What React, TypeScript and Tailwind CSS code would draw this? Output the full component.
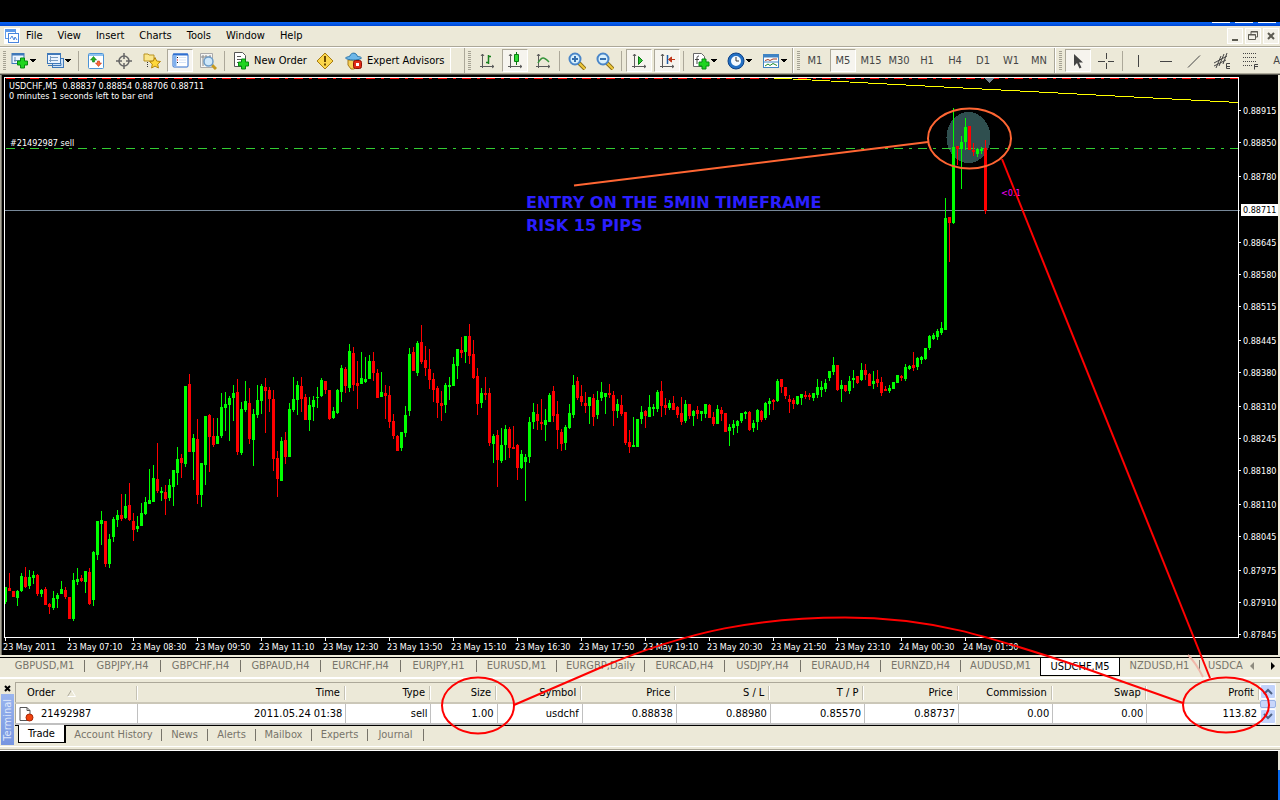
import type { ReactNode } from "react";

type Candle = [up: number, high: number, top: number, bottom: number, low: number];

const candles: Candle[] = [
  [1, 587, 587, 602, 604], [0, 573, 588, 591, 591], [0, 591, 591, 597, 597], [1, 590, 591, 598, 606],
  [1, 573, 576, 591, 592], [0, 567, 577, 587, 588], [1, 570, 577, 586, 589], [1, 571, 575, 578, 584],
  [0, 574, 575, 594, 596], [1, 589, 590, 594, 597], [0, 587, 589, 605, 605], [0, 603, 604, 607, 614],
  [1, 591, 598, 608, 610], [1, 593, 595, 599, 608], [1, 581, 589, 594, 594], [0, 587, 590, 597, 599],
  [0, 597, 597, 619, 619], [1, 573, 580, 619, 621], [1, 568, 579, 582, 585], [0, 575, 578, 581, 582],
  [1, 571, 571, 582, 593], [0, 568, 572, 604, 605], [1, 551, 552, 600, 606], [1, 521, 521, 555, 560],
  [1, 511, 520, 524, 545], [0, 521, 521, 564, 567], [1, 534, 539, 564, 568], [1, 517, 519, 537, 542],
  [1, 510, 515, 520, 527], [0, 494, 515, 519, 521], [1, 494, 506, 518, 519], [0, 483, 505, 520, 521],
  [0, 513, 521, 530, 541], [1, 516, 526, 529, 532], [1, 503, 513, 526, 526], [1, 497, 502, 514, 515],
  [1, 469, 500, 504, 504], [1, 465, 478, 502, 502], [0, 443, 479, 491, 493], [1, 487, 491, 493, 501],
  [0, 485, 492, 499, 515], [1, 479, 485, 498, 501], [1, 470, 470, 487, 506], [1, 447, 459, 473, 485],
  [0, 454, 458, 463, 478], [1, 386, 386, 464, 467], [0, 374, 384, 452, 452], [1, 434, 438, 452, 480],
  [0, 419, 439, 495, 504], [1, 463, 463, 495, 507], [1, 416, 416, 465, 485], [0, 414, 415, 437, 472],
  [0, 418, 436, 445, 447], [1, 418, 436, 444, 444], [1, 393, 407, 436, 438], [1, 392, 404, 408, 431],
  [1, 396, 398, 405, 441], [1, 385, 393, 398, 421], [0, 379, 392, 452, 455], [1, 402, 409, 453, 455],
  [1, 381, 401, 410, 412], [0, 388, 403, 439, 444], [1, 409, 414, 440, 466], [1, 385, 400, 415, 418],
  [1, 384, 386, 401, 414], [0, 378, 387, 391, 433], [0, 387, 390, 399, 412], [0, 390, 399, 459, 471],
  [0, 451, 458, 479, 497], [1, 437, 441, 481, 481], [0, 432, 440, 457, 464], [1, 403, 409, 457, 457],
  [1, 377, 399, 410, 412], [1, 381, 385, 400, 415], [0, 377, 386, 399, 412], [0, 394, 397, 420, 420],
  [1, 397, 405, 420, 431], [1, 396, 400, 407, 421], [1, 387, 397, 398, 408], [1, 378, 380, 396, 397],
  [0, 381, 381, 390, 394], [0, 390, 390, 419, 420], [1, 407, 411, 418, 419], [1, 389, 390, 413, 414],
  [1, 365, 368, 392, 402], [0, 367, 369, 386, 393], [1, 344, 351, 388, 392], [0, 347, 353, 385, 391],
  [0, 361, 383, 386, 409], [1, 352, 378, 384, 384], [1, 357, 379, 382, 383], [1, 355, 361, 379, 379],
  [0, 352, 361, 373, 381], [0, 369, 373, 398, 398], [1, 372, 392, 397, 397], [0, 385, 393, 396, 419],
  [0, 386, 395, 422, 428], [0, 414, 421, 436, 439], [0, 435, 436, 451, 451], [1, 432, 432, 448, 451],
  [1, 406, 415, 433, 437], [1, 348, 354, 411, 416], [0, 347, 352, 371, 371], [1, 341, 343, 373, 376],
  [0, 325, 342, 362, 364], [0, 346, 360, 368, 376], [0, 349, 369, 380, 389], [0, 373, 379, 390, 402],
  [0, 386, 388, 403, 418], [0, 391, 403, 406, 421], [1, 383, 385, 405, 413], [1, 377, 385, 387, 400],
  [1, 357, 364, 386, 386], [1, 349, 349, 366, 379], [0, 337, 350, 353, 358], [1, 336, 336, 352, 363],
  [0, 324, 336, 356, 364], [0, 340, 354, 378, 379], [0, 368, 376, 404, 415], [1, 388, 393, 403, 408],
  [0, 377, 393, 395, 400], [0, 388, 393, 443, 446], [1, 434, 436, 444, 463], [0, 430, 435, 460, 487],
  [1, 428, 445, 461, 463], [1, 425, 429, 445, 460], [0, 427, 429, 448, 458], [0, 426, 447, 449, 449],
  [0, 444, 445, 468, 480], [1, 450, 454, 468, 469], [1, 454, 457, 462, 501], [1, 417, 422, 457, 463],
  [1, 403, 412, 422, 429], [0, 404, 414, 421, 430], [0, 399, 422, 424, 430], [1, 409, 420, 425, 441],
  [1, 393, 395, 422, 422], [0, 386, 391, 416, 422], [0, 401, 414, 430, 449], [0, 429, 432, 444, 451],
  [1, 425, 427, 443, 450], [1, 404, 413, 428, 429], [1, 375, 385, 415, 418], [0, 377, 381, 398, 400],
  [0, 385, 396, 402, 406], [0, 392, 403, 406, 413], [1, 397, 397, 406, 424], [0, 394, 398, 417, 426],
  [1, 391, 400, 415, 419], [1, 382, 392, 398, 401], [1, 393, 393, 397, 414], [0, 384, 393, 395, 398],
  [0, 391, 395, 411, 426], [1, 399, 404, 411, 418], [0, 395, 405, 414, 416], [0, 412, 412, 443, 445],
  [0, 430, 442, 447, 453], [1, 417, 445, 447, 447], [1, 419, 419, 447, 447], [1, 406, 412, 419, 424],
  [0, 410, 411, 416, 428], [1, 395, 407, 417, 417], [1, 404, 407, 409, 416], [1, 390, 392, 409, 412],
  [0, 381, 391, 406, 417], [0, 398, 405, 408, 415], [1, 400, 403, 408, 410], [0, 396, 403, 410, 410],
  [0, 406, 407, 415, 418], [0, 397, 413, 422, 425], [1, 400, 404, 421, 423], [0, 404, 404, 416, 419],
  [1, 410, 411, 416, 426], [0, 406, 410, 414, 419], [1, 411, 411, 414, 421], [1, 404, 404, 414, 418],
  [0, 404, 405, 418, 418], [0, 412, 417, 424, 426], [1, 405, 409, 424, 424], [0, 407, 410, 414, 421],
  [0, 413, 413, 432, 432], [1, 424, 427, 431, 446], [1, 420, 424, 428, 435], [1, 420, 421, 426, 433],
  [1, 413, 413, 421, 423], [1, 411, 412, 414, 419], [0, 411, 412, 430, 431], [1, 420, 423, 428, 432],
  [1, 409, 410, 422, 430], [0, 410, 411, 420, 422], [1, 402, 403, 418, 420], [1, 398, 401, 404, 415],
  [0, 399, 400, 402, 410], [1, 379, 381, 401, 402], [0, 379, 379, 387, 393], [0, 387, 387, 396, 399],
  [0, 395, 399, 402, 413], [0, 398, 400, 404, 409], [1, 396, 396, 404, 405], [1, 394, 394, 398, 405],
  [0, 391, 395, 397, 399], [0, 393, 395, 397, 400], [1, 393, 393, 398, 401], [1, 379, 387, 395, 398],
  [1, 381, 387, 390, 397], [1, 379, 383, 389, 392], [1, 371, 371, 378, 381], [1, 357, 365, 372, 375],
  [0, 365, 365, 390, 391], [1, 380, 385, 389, 402], [0, 385, 385, 391, 392], [1, 376, 381, 391, 394],
  [1, 370, 378, 380, 388], [0, 376, 376, 383, 384], [1, 363, 370, 380, 381], [0, 364, 370, 375, 380],
  [0, 373, 374, 386, 386], [1, 371, 381, 384, 389], [0, 370, 379, 383, 387], [0, 377, 382, 393, 396],
  [0, 386, 389, 391, 391], [1, 385, 388, 391, 393], [1, 382, 382, 389, 389], [1, 375, 375, 383, 383],
  [0, 375, 376, 378, 381], [1, 364, 367, 379, 381], [1, 365, 366, 369, 370], [0, 352, 365, 368, 371],
  [1, 357, 358, 367, 370], [1, 356, 357, 360, 364], [1, 348, 348, 359, 360], [1, 335, 336, 348, 350],
  [1, 333, 335, 339, 340], [1, 329, 331, 337, 340], [1, 322, 328, 333, 335], [1, 198, 218, 330, 330],
  [0, 217, 217, 223, 262], [1, 108, 147, 223, 224], [0, 146, 146, 149, 165], [1, 136, 142, 149, 189],
  [1, 118, 127, 142, 150], [0, 126, 126, 150, 150], [0, 143, 150, 152, 156], [1, 148, 149, 154, 157],
  [1, 147, 149, 151, 154], [0, 140, 148, 211, 214],
];

const prices: [number, string][] = [
  [110, "0.88915"], [142, "0.88850"], [176, "0.88780"], [242, "0.88645"],
  [274, "0.88580"], [306, "0.88515"], [340, "0.88445"], [372, "0.88380"],
  [406, "0.88310"], [438, "0.88245"], [470, "0.88180"], [504, "0.88110"],
  [536, "0.88045"], [570, "0.87975"], [602, "0.87910"], [634, "0.87845"],
];

const times = [
  "23 May 2011", "23 May 07:10", "23 May 08:30", "23 May 09:50", "23 May 11:10", "23 May 12:30",
  "23 May 13:50", "23 May 15:10", "23 May 16:30", "23 May 17:50", "23 May 19:10", "23 May 20:30",
  "23 May 21:50", "23 May 23:10", "24 May 00:30", "24 May 01:50",
];

const symbolTabs: [string, string][] = [
  ["GBPUSD,M1", "w-20"], ["GBPJPY,H4", "w-[76px]"], ["GBPCHF,H4", "w-20"], ["GBPAUD,H4", "w-20"],
  ["EURCHF,H4", "w-20"], ["EURJPY,H1", "w-[76px]"], ["EURUSD,M1", "w-20"], ["EURGBP,Daily", "w-[88px]"],
  ["EURCAD,H4", "w-20"], ["USDJPY,H4", "w-[76px]"], ["EURAUD,H4", "w-20"], ["EURNZD,H4", "w-20"],
  ["AUDUSD,M1", "w-20"], ["USDCHF,M5", "w-20"], ["NZDUSD,H1", "w-20"],
];

const terminalTabs: [string, string][] = [
  ["Account History", "w-24"], ["News", "w-[46px]"], ["Alerts", "w-12"],
  ["Mailbox", "w-14"], ["Experts", "w-14"], ["Journal", "w-14"],
];

const columns: [string, string, string][] = [
  ["Time", "2011.05.24 01:38", "w-[208px]"],
  ["Type", "sell", "w-[85px]"],
  ["Size", "1.00", "w-[66px]"],
  ["Symbol", "usdchf", "w-[85px]"],
  ["Price", "0.88838", "w-[94px]"],
  ["S / L", "0.88980", "w-[94px]"],
  ["T / P", "0.85570", "w-[94px]"],
  ["Price", "0.88737", "w-[94px]"],
  ["Commission", "0.00", "w-[94px]"],
  ["Swap", "0.00", "w-[94px]"],
  ["Profit", "113.82", "w-[113px]"],
];

function Icon({ children }: { children: ReactNode }) {
  return (
    <svg width="18" height="18" viewBox="0 0 18 18" fill="none" className="shrink-0">
      {children}
    </svg>
  );
}

function Tool({ label, on, children }: { label: string; on?: boolean; children: ReactNode }) {
  return (
    <button
      aria-label={label}
      className={`mx-px flex h-[23px] w-[26px] shrink-0 items-center justify-center border ${
        on ? "border-t-[#aca899] border-r-white border-b-white border-l-[#aca899] bg-[#f6f4ee]" : "border-transparent"
      }`}
    >
      {children}
    </button>
  );
}

function DropTool({ label, children }: { label: string; children: ReactNode }) {
  return (
    <button aria-label={label} className="flex h-[23px] w-[35px] shrink-0 items-center pl-[5px]">
      {children}
      <svg width="8" height="5" viewBox="0 0 8 5">
        <path d="M1 1h6v1H1zM2 2h4v1H2zM3 3h2v1H3z" fill="#000" />
      </svg>
    </button>
  );
}

function Sep() {
  return <span className="mx-[2px] h-5 w-[2px] shrink-0 border-l border-[#aca899]" />;
}

function Grip() {
  return (
    <span className="flex w-2 shrink-0 flex-col gap-px pl-[3px]">
      {Array.from({ length: 10 }, (_, i) => (
        <i key={i} className="block h-px w-[3px] bg-[#a5a293]" />
      ))}
    </span>
  );
}

function Plus({ x, y }: { x: number; y: number }) {
  return (
    <path
      transform={`translate(${x} ${y})`}
      d="M3.5.5h4v3h3v4h-3v3h-4v-3h-3v-4h3z"
      fill="#1fd41f"
      stroke="#078a12"
    />
  );
}

const axes = <path d="M4.5 2v14M2 14.5h14M3 4l1.5-2L6 4M14 13l2 1.5-2 1.5" stroke="#5a5a5a" />;

function Lens({ minus }: { minus?: boolean }) {
  return (
    <Icon>
      <path d="M11 11l6 6" stroke="#8a6d16" strokeWidth="4" />
      <path d="M11 11l6 6" stroke="#f0c93c" strokeWidth="2" />
      <circle cx="7" cy="7" r="5.5" fill="#d9f0fc" stroke="#4a86c8" strokeWidth="2" />
      <path d={minus ? "M4 7h6" : "M4 7h6M7 4v6"} stroke="#356fae" strokeWidth="2" />
    </Icon>
  );
}

function Toolbar() {
  return (
    <div className="flex h-[26px] items-center overflow-hidden border-t border-white bg-[#ece9d8] text-[11px]">
      <Grip />
      <div className="-ml-0.5 flex shrink-0 items-center">
        <DropTool label="New chart">
          <Icon>
            <rect x="1" y="1.5" width="12" height="10" fill="#eaf4ff" stroke="#3f78b8" />
            <path d="M1 2.5h12" stroke="#3f78b8" strokeWidth="2" />
            <path d="M4 5v5M3 8.5h7" stroke="#6b8fb5" />
            <Plus x={6} y={5.5} />
          </Icon>
        </DropTool>
        <DropTool label="Profiles">
          <Icon>
            <rect x="6.5" y="6.5" width="11" height="9" fill="#cfe3f8" stroke="#3f78b8" />
            <rect x="1.5" y="1.5" width="13" height="10" fill="#eaf4ff" stroke="#3f78b8" />
            <path d="M1 2.5h14M2 13.5h13v-2" stroke="#3f78b8" />
            <path d="M4.5 4v6M3 8.5h9M4 5.5h8" stroke="#7a9cc0" />
          </Icon>
        </DropTool>
        <Sep />
        <Tool label="Market Watch">
          <Icon>
            <rect x="1.5" y="1.5" width="15" height="15" rx="1" fill="#fff" stroke="#4b93d6" />
            <path d="M2 3h14" stroke="#8fc2f0" strokeWidth="2" />
            <path d="M6.5 4.5L3.5 8h2v2h2V8h2z" fill="#22b022" stroke="#0d7a12" strokeWidth=".6" />
            <path d="M11.5 14.5l3-3.5h-2V9h-2v2h-2z" fill="#ff6a3a" stroke="#c03410" strokeWidth=".6" />
          </Icon>
        </Tool>
        <Tool label="Data Window">
          <Icon>
            <circle cx="9" cy="9" r="5" stroke="#666" strokeWidth="1.5" />
            <path d="M9 1v6M9 11v6M1 9h6M11 9h6" stroke="#666" strokeWidth="1.5" />
          </Icon>
        </Tool>
        <Tool label="Navigator">
          <Icon>
            <path d="M1 2h4l1 1h5v6H1z" fill="#fbe68a" stroke="#b99324" />
            <path d="M4.5 10v6" stroke="#333" strokeDasharray="1 1" />
            <path d="M12 5.500l1.700 3.500 3.800.5-2.800 2.600.7 3.900-3.400-1.900-3.400 1.900.7-3.900L6.500 9.500l3.800-.5z" fill="#ffd83a" stroke="#b5860b" />
          </Icon>
        </Tool>
        <Tool label="Terminal" on>
          <Icon>
            <rect x="2" y="2" width="15" height="13" rx="1" fill="#fff" stroke="#2f6fd0" />
            <path d="M2 2.5h15" stroke="#2f6fd0" strokeWidth="2" />
            <path d="M4 3v11" stroke="#7fb0ee" strokeWidth="3" />
            <path d="M6 5.5h1M6 10.500h1" stroke="#111" />
            <path d="M6 8h1" stroke="red" />
            <path d="M8 5.5h7M8 8h7M8 10.5h7" stroke="#d5e3f6" />
          </Icon>
        </Tool>
        <Tool label="Strategy Tester">
          <Icon>
            <path d="M1.5 1.5h12v14h-12z" fill="#f5f5f2" stroke="#aaa" />
            <path d="M4 3v11M7 3v3M11 3v3M2 5h10" stroke="#888" />
            <path d="M13 13l4 4" stroke="#c59a20" strokeWidth="3" />
            <circle cx="9.5" cy="9.5" r="4.5" fill="#cfe8fa" stroke="#6c9cc8" strokeWidth="1.5" />
          </Icon>
        </Tool>
        <Sep />
        <button className="flex h-[23px] w-[83px] shrink-0 items-center gap-1 whitespace-nowrap pl-1">
          <Icon>
            <path d="M2.5.5h8l3 3v11h-11z" fill="#fff" stroke="#555" />
            <path d="M5 4.5h4M5 7.5h6M5 10.5h4" stroke="#555" />
            <Plus x={6} y={6.5} />
          </Icon>
          New Order
        </button>
        <Tool label="MetaEditor">
          <Icon>
            <path d="M9 1l8 8-8 8-8-8z" fill="#fbd64c" stroke="#a87c10" />
            <path d="M9 4v6M9 11.5v2" stroke="#6b4a00" strokeWidth="2" />
          </Icon>
        </Tool>
        <button className="flex h-[23px] w-[111px] shrink-0 items-center gap-1 whitespace-nowrap pl-1.5">
          <Icon>
            <path d="M3 8h11l-1 6-4 3H6l-3-4z" fill="#f4cf56" stroke="#a97a18" />
            <path d="M.5 6c2 2.5 13 3 16 0-1-1.500-3-1.500-4-1.500-1-4-6-5-8 0-1 0-3 .5-4 1.500z" fill="#6db7e8" stroke="#2873a8" />
            <rect x="8.5" y="8.5" width="8" height="8" rx="2" fill="#e02a16" stroke="#8e1207" />
            <path d="M11 11h3v3h-3z" fill="#fff" />
          </Icon>
          Expert Advisors
        </button>
      </div>
      <span className="h-full w-[15px] shrink-0 border-x border-r-[#aca899] border-l-white" />
      <Grip />
      <Tool label="Bar Chart">
        <Icon>
          {axes}
          <path d="M10.5 3v9M8 10.5h2M11 4.5h2" stroke="#17801c" strokeWidth="1.5" />
        </Icon>
      </Tool>
      <Tool label="Candlesticks" on>
        <Icon>
          {axes}
          <path d="M10.5 0v13" stroke="#0b7a12" />
          <path d="M8.5 2.5h4v7h-4z" fill="#2fdd35" stroke="#0b7a12" />
        </Icon>
      </Tool>
      <Tool label="Line Chart">
        <Icon>
          {axes}
          <path d="M4 11c4-7 6-6 11-1" stroke="#36943a" strokeWidth="1.5" />
        </Icon>
      </Tool>
      <Sep />
      <Tool label="Zoom In"><Lens /></Tool>
      <Tool label="Zoom Out"><Lens minus /></Tool>
      <Sep />
      <Tool label="Auto Scroll" on>
        <Icon>
          {axes}
          <path d="M8.5 4.5v8l4-4z" fill="#2fc535" stroke="#0b7a12" />
        </Icon>
      </Tool>
      <Tool label="Chart Shift" on>
        <Icon>
          {axes}
          <path d="M9.5 3v9" stroke="#1f5fa8" strokeWidth="1.5" />
          <path d="M17 7.5h-6M13.5 5l-3 2.5 3 2.5z" stroke="#c0361a" fill="#c0361a" />
        </Icon>
      </Tool>
      <Sep />
      <DropTool label="Indicators">
        <Icon>
          <path d="M1.5 1.5h8l3 3v10h-11z" fill="#fff" stroke="#666" />
          <path d="M7 4c-2 0-2 1-2 3v5M3 7.5h4" stroke="#444" />
          <Plus x={6.5} y={6.5} />
        </Icon>
      </DropTool>
      <DropTool label="Periods">
        <Icon>
          <circle cx="9" cy="9" r="6.5" fill="#f4faff" stroke="#2370c4" strokeWidth="3" />
          <circle cx="9" cy="9" r="8" stroke="#0d4187" />
          <path d="M9 5v4h3" stroke="#333" />
        </Icon>
      </DropTool>
      <DropTool label="Templates">
        <Icon>
          <rect x="1.5" y="2.5" width="15" height="13" fill="#fff" stroke="#3f83c4" />
          <path d="M1 4h16" stroke="#3f83c4" strokeWidth="3" />
          <path d="M3 8.5l3-1 2 1 3-1.500h4" stroke="#a03a20" />
          <path d="M1 10h16" stroke="#3f83c4" />
          <path d="M3 14l3-2 2 1.500 3-2 4 2" stroke="#1d8a2c" />
        </Icon>
      </DropTool>
      <span className="h-full w-[2px] shrink-0 border-x border-r-white border-l-[#aca899]" />
      <Grip />
      <div className="-ml-px flex shrink-0">
        {["M1", "M5", "M15", "M30", "H1", "H4", "D1", "W1", "MN"].map((t) => (
          <Tool key={t} label={t} on={t === "M5"}>
            <span className="text-[11px] text-[#454545]">{t}</span>
          </Tool>
        ))}
      </div>
      <span className="ml-px h-full w-[2px] shrink-0 border-x border-r-white border-l-[#aca899]" />
      <Grip />
      <Tool label="Cursor" on>
        <Icon>
          <path d="M5 2v12l3-3 2.500 5.500 2-1L10 10.500h4z" fill="#444" />
        </Icon>
      </Tool>
      <Tool label="Crosshair">
        <Icon>
          <path d="M9.5 1v6M9.5 11v6M1 9.5h7M11 9.5h6" stroke="#444" />
        </Icon>
      </Tool>
      <span className="ml-[2px] h-5 w-[2px] shrink-0 border-l border-[#aca899]" />
      <Tool label="Vertical Line">
        <Icon><path d="M9.5 3v12" stroke="#444" /></Icon>
      </Tool>
      <Tool label="Horizontal Line">
        <Icon><path d="M3 9.5h12" stroke="#444" /></Icon>
      </Tool>
      <Tool label="Trendline">
        <Icon><path d="M3 15.5L15 3.5" stroke="#444" /></Icon>
      </Tool>
      <Tool label="Equidistant Channel">
        <Icon>
          <path d="M1 11L14 4M1 14l12-6M3 16L8 4M6 14l5-12M10 12l4-11" stroke="#444" />
          <path d="M17 11.5h-3.5v5H17M14 14.5h3" stroke="#444" />
        </Icon>
      </Tool>
      <Tool label="Fibonacci">
        <Icon>
          <path d="M2 1.5h14M2 5.5h14M2 9.5h14M2 13.5h9" stroke="#444" strokeDasharray="1 1" />
          <path d="M17 12.5h-3.5v5M14 14.5h3" stroke="#444" />
        </Icon>
      </Tool>
      <button className="flex h-[23px] min-w-3 flex-1 items-center justify-end text-[11px] text-[#454545]">A</button>
    </div>
  );
}

function Chart() {
  return (
    <div className="overflow-hidden border-l border-[#aca899] bg-black">
      <svg
        width="1277"
        height="580"
        viewBox="1 75 1277 580"
        shapeRendering="crispEdges"
        className="block font-['DejaVu_Sans_Condensed',sans-serif] text-[9px]"
      >
        <path d="M1.5 75v580" stroke="#716f64" />
        <path d="M6 78.5h1232" stroke="red" strokeDasharray="9 6 3 6" />
        <ellipse cx="968.5" cy="137.5" rx="22" ry="25.5" fill="#2f4f4f" />
        <path d="M764 77.5L1238 102.5" stroke="#ff0" />
        <path d="M6 148.5h1232" stroke="#32cd32" strokeDasharray="9 6 3 6" />
        <path d="M5 210.5h1235" stroke="#778899" />
        {candles.map(([up, high, top, bottom, low], i) => {
          const x = 4 + i * 4;
          return (
            <g key={i} fill={up ? "#00ff00" : "#ff0000"}>
              <rect x={x + 1} y={high} width="1" height={low - high} />
              <rect x={x} y={top} width="3" height={bottom - top} />
            </g>
          );
        })}
        <path d="M985 78h9l-4.5 5z" fill="#708090" />
        <path d="M4.5 637.5V77.5H1238.5V637.5z" stroke="#fff" fill="none" />
        {prices.map(([y, label]) => (
          <g key={label} fill="#fff">
            <rect x="1239" y={y} width="2" height="1" />
            <text x="1243" y={y + 4}>{label}</text>
          </g>
        ))}
        <rect x="1241" y="204" width="37" height="12" fill="#fff" />
        <text x="1243" y="213" fill="#000">0.88711</text>
        {times.map((label, i) => (
          <g key={label} fill="#fff">
            <rect x={5 + i * 64} y="638" width="1" height="3" />
            <text x={3 + i * 64} y="650">{label}</text>
          </g>
        ))}
        <g fill="#fff">
          <text x="9" y="89" className="whitespace-pre">USDCHF,M5  0.88837 0.88854 0.88706 0.88711</text>
          <text x="9" y="99">0 minutes 1 seconds left to bar end</text>
          <text x="10" y="146">#21492987 sell</text>
        </g>
        <text x="1001" y="196" fill="#f0f">&lt;0.1</text>
        <g fill="#2b1fff" className="font-['DejaVu_Sans',sans-serif] text-[16px] font-bold">
          <text x="526" y="208">ENTRY ON THE 5MIN TIMEFRAME</text>
          <text x="526" y="231">RISK 15 PIPS</text>
        </g>
      </svg>
    </div>
  );
}

function SymbolTabs() {
  return (
    <div className="flex h-[21px] overflow-hidden border-t border-b border-t-black border-b-white bg-[#ece9d8] pl-[5px] text-[#77746a]">
      {symbolTabs.map(([name, width]) =>
        name === "USDCHF,M5" ? (
          <button key={name} className={`${width} -ml-px h-[18px] shrink-0 border-x border-b border-black bg-white text-black`}>
            {name}
          </button>
        ) : (
          <button key={name} className={`${width} flex h-4 shrink-0 items-center justify-center`}>
            <span className="flex-1 text-center">{name}</span>
            <i className="h-3 w-px bg-[#77746a]" />
          </button>
        ),
      )}
      <button className="h-4 shrink-0 pl-2 text-left">USDCA</button>
      <div className="flex h-4 flex-1 items-center justify-between pr-1 pl-1.5">
        <button aria-label="Scroll left">
          <svg width="6" height="8"><path d="M5 0v8L1 4z" fill="#8f8c80" /></svg>
        </button>
        <button aria-label="Scroll right">
          <svg width="6" height="8"><path d="M1 0v8l4-4z" fill="#000" /></svg>
        </button>
      </div>
    </div>
  );
}

function Terminal() {
  return (
    <div className="flex border-t border-white bg-[#ece9d8] pt-[3px]">
      <div className="flex w-[15px] shrink-0 flex-col items-center">
        <button aria-label="Close terminal" className="flex h-3 items-center">
          <svg width="7" height="7"><path d="M1 1l5 5M6 1L1 6" stroke="#000" strokeWidth="2" /></svg>
        </button>
        <div className="flex h-[51px] w-[13px] items-center justify-center bg-linear-to-b from-[#9ab5ee] to-[#7795e0]">
          <span className="rotate-180 text-[11px] leading-none text-[#dfe8fb] [writing-mode:vertical-rl]">Terminal</span>
        </div>
      </div>
      <div className="min-w-0 flex-1 border-t border-[#aca899]">
        <div className="flex border-b border-black pr-[4px]">
          <table className="flex-1 table-fixed border-collapse border-l border-[#aca899]">
            <thead>
              <tr className="h-5 border-b-2 border-[#cbc7b8]">
                <th className="w-[122px] pl-[11px] text-left font-normal">
                  <span className="flex items-center justify-between">
                    <span className="flex items-center gap-3">
                      Order
                      <svg width="9" height="8" fill="none">
                        <path d="M4.5 1L.5 7.5" stroke="#aca899" />
                        <path d="M4.5 1l4 6.5H.5" stroke="#fff" />
                      </svg>
                    </span>
                    <i className="h-[14px] w-[2px] border-x border-r-white border-l-[#c5c2b4]" />
                  </span>
                </th>
                {columns.map(([name, , width], i) => (
                  <th key={i} className={`${width} font-normal`}>
                    <span className="flex items-center justify-end gap-1">
                      {name}
                      <i className="h-[14px] w-[2px] border-x border-r-white border-l-[#c5c2b4]" />
                    </span>
                  </th>
                ))}
              </tr>
            </thead>
            <tbody>
              <tr className="h-[21px] border-b-2 border-[#c0c0c0] bg-white">
                <td className="border-r border-[#c0c0c0] pl-[3px]">
                  <span className="flex items-center gap-[7px]">
                    <svg width="15" height="16" fill="none">
                      <path d="M1 1.5h7l3 3v10H1z" fill="#fff" stroke="#555" />
                      <path d="M8 1.5v3h3" stroke="#555" />
                      <circle cx="10.5" cy="11.5" r="3.5" fill="#f0440e" stroke="#a82606" />
                    </svg>
                    21492987
                  </span>
                </td>
                {columns.map(([, value], i) => (
                  <td key={i} className={`pr-[3px] text-right ${i < 10 ? "border-r border-[#c0c0c0]" : ""}`}>
                    {value}
                  </td>
                ))}
              </tr>
            </tbody>
          </table>
          <div className="flex w-4 flex-col justify-between bg-[#f2f3fb] py-px">
            <button aria-label="Scroll up" className="flex h-[15px] items-center justify-center rounded-xs border border-white bg-[#c2d3fc]">
              <svg width="10" height="7" fill="none"><path d="M1 6l4-4 4 4" stroke="#4d6185" strokeWidth="2" /></svg>
            </button>
            <span className="h-2 rounded-xs border border-[#98b1e4] bg-[#c8d6fb]" />
            <button aria-label="Scroll down" className="flex h-[15px] items-center justify-center rounded-xs border border-white bg-[#c2d3fc]">
              <svg width="10" height="7" fill="none"><path d="M1 1l4 4 4-4" stroke="#4d6185" strokeWidth="2" /></svg>
            </button>
          </div>
        </div>
        <div className="flex h-5 pl-[3px] text-[#77746a]">
          <button className="-mt-px h-[18px] w-12 border-r-2 border-b border-l border-black bg-white text-black">Trade</button>
          {terminalTabs.map(([name, width]) => (
            <button key={name} className={`${width} flex h-[18px] shrink-0 items-center`}>
              <span className="flex-1 text-center">{name}</span>
              <i className="h-3 w-px bg-[#77746a]" />
            </button>
          ))}
        </div>
      </div>
    </div>
  );
}

function Annotations() {
  return (
    <svg width="1280" height="800" fill="none" strokeWidth="2" className="pointer-events-none absolute top-0 left-0">
      <g stroke="#ff6633">
        <ellipse cx="969.5" cy="138.5" rx="41.5" ry="30" />
        <path d="M574 185.5L928 142" />
      </g>
      <path d="M1188 655q8 8 15 22" stroke="#f0b8aa" />
      <g stroke="#ff0000">
        <path d="M1002 159L1210 678" />
        <ellipse cx="478" cy="705.5" rx="36" ry="28" />
        <ellipse cx="1226" cy="705" rx="43" ry="27.5" />
        <path d="M514 705L602 667C690 630 760 617.5 845 617.5S985 635 1084 668L1183 703" />
      </g>
    </svg>
  );
}

export default function App() {
  return (
    <div className="relative min-h-screen overflow-hidden bg-black font-['DejaVu_Sans_Condensed',sans-serif] text-[11px] leading-[14px] text-black">
      <div className="h-[22px]" />
      <div className="flex h-1 justify-end gap-[5px] bg-linear-to-b from-[#0a66f5] to-[#0046d5] pr-1">
        <i className="h-px w-[18px] bg-white" />
        <i className="h-px w-[18px] bg-white" />
        <i className="h-px w-[18px] bg-white" />
      </div>
      <div className="flex h-[21px] items-center border-b border-[#aca899] bg-[#ece9d8] pl-1">
        <svg width="16" height="16" fill="none" className="bg-white">
          <rect x="1.5" y="1.5" width="10" height="9" stroke="#5f9bea" />
          <path d="M1 3h11" stroke="#5f9bea" strokeWidth="2" />
          <rect x="4.5" y="5.5" width="10" height="9" fill="#fff" stroke="#4a86dd" />
          <path d="M6 11l2-3 2 4 1-3 2 3" stroke="#4a86dd" />
        </svg>
        <nav className="ml-1.5 flex flex-1 gap-[15px]">
          {["File", "View", "Insert", "Charts", "Tools", "Window", "Help"].map((m) => (
            <button key={m}>{m}</button>
          ))}
        </nav>
        <div className="flex gap-0.5 pr-px">
          <button aria-label="Minimize" className="h-4 w-4 border border-white bg-[#f3f1e8]">
            <svg width="14" height="14"><path d="M4 11h6" stroke="#5c5b52" strokeWidth="2" /></svg>
          </button>
          <button aria-label="Restore" className="h-4 w-4 border border-white bg-[#f3f1e8]">
            <svg width="14" height="14" fill="none" stroke="#5c5b52">
              <path d="M5 5V2.5h6.500V8H10M5 3h7" />
              <path d="M2.5 5.500h7v5h-7zM2 6h8" />
            </svg>
          </button>
          <button aria-label="Close" className="h-4 w-4 border border-white bg-[#f3f1e8]">
            <svg width="14" height="14"><path d="M4 4l6 6M10 4l-6 6" stroke="#5c5b52" strokeWidth="2" /></svg>
          </button>
        </div>
      </div>
      <Toolbar />
      <div className="h-[2px] border-t border-[#aca899] bg-[#56554d]" />
      <div className="bg-[#ece9d8] pr-[2px] pb-[2px]">
        <Chart />
      </div>
      <SymbolTabs />
      <Terminal />
      <div className="flex h-[5px] flex-col justify-between border-t border-white bg-[#ece9d8]">
        <i className="mt-[2px] h-px bg-[#aca899]" />
        <i className="h-px bg-white" />
      </div>
      <div className="ml-auto w-[2px]">
        <div className="h-[19px] bg-[#e6e4da]" />
        <div className="h-[30px] bg-[#0a6cf0]" />
      </div>
      <Annotations />
    </div>
  );
}
